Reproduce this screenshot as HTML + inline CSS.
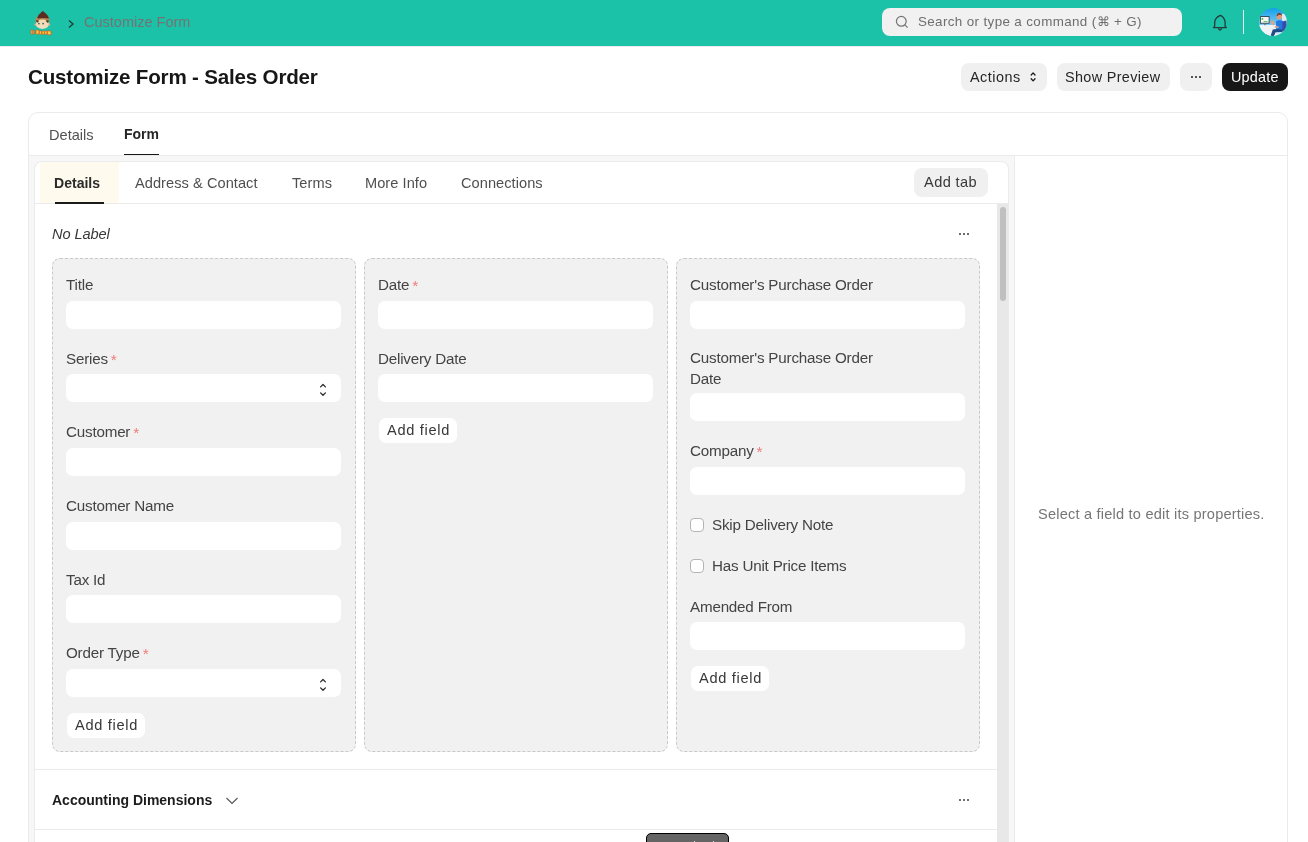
<!DOCTYPE html>
<html><head><meta charset="utf-8">
<style>
*{box-sizing:border-box;margin:0;padding:0}
html,body{width:1308px;height:842px;overflow:hidden;background:#fff;font-family:"Liberation Sans",sans-serif}
.r{position:absolute}
.t{position:absolute;white-space:nowrap;line-height:1;will-change:transform}
</style></head><body>
<div class="r" style="left:0px;top:0px;width:1308px;height:46px;background:#1bc2a8"></div>
<div class="r" style="left:0px;top:46px;width:1308px;height:1px;background:#ececec"></div>
<svg class="r" style="left:26px;top:8px" width="30" height="30" viewBox="26 8 30 30">
<path d="M35.3 22.5 L35.8 17.6 Q42 15.8 49 17.2 L49.4 22.5 Z" fill="#b98654"/>
<path d="M42.8 11 C41.2 12.6 38.2 14.3 37.4 17.4 L37.6 18.6 Q43 17.6 48.8 18.4 C48.6 15.2 45.2 13 42.8 11 Z" fill="#5c2b22"/>
<ellipse cx="42.4" cy="24.2" rx="6.6" ry="4.7" fill="#f2deb6"/>
<path d="M35.9 20.6 Q37.6 19.7 39.2 21 L37.2 22.8 Z" fill="#5a3826"/>
<path d="M45.6 21 Q47.4 19.7 48.9 20.8 L47.8 23 Z" fill="#5a3826"/>
<circle cx="38.9" cy="23.6" r="0.95" fill="#59606a"/>
<circle cx="43.1" cy="23.6" r="0.95" fill="#59606a"/>
<circle cx="35.6" cy="24.6" r="1.1" fill="#eeb29c"/>
<circle cx="49.1" cy="24.4" r="1.1" fill="#eeb29c"/>
<ellipse cx="41.6" cy="27.1" rx="2" ry="0.8" fill="#e9e2d6"/>
<g fill="#f7cf45" stroke="#d9531c" stroke-width="0.7">
<rect x="31" y="30" width="1.8" height="4" rx="0.4"/>
<rect x="33.2" y="30.4" width="1.3" height="3.6" rx="0.3"/>
<rect x="36" y="30" width="3" height="4.2" rx="0.8"/>
<rect x="39.3" y="31" width="2.4" height="3.2" rx="0.5"/>
<rect x="42" y="31" width="2.4" height="3.2" rx="0.5"/>
<rect x="44.7" y="31" width="2.4" height="3.2" rx="0.5"/>
<rect x="47.4" y="31" width="3.6" height="3.8" rx="0.6"/>
</g>
</svg>
<svg class="r" style="left:66px;top:18px" width="10" height="12" viewBox="0 0 10 12"><path d="M3 2.5 L7 6 L3 9.5" fill="none" stroke="#1d3b38" stroke-width="1.3"/></svg>
<div class="t" style="left:83.8px;top:15.42px;font-size:14.5px;color:#767272;font-weight:normal;font-style:normal;letter-spacing:0px;">Customize Form</div>
<div class="r" style="left:882px;top:8px;width:300px;height:28px;background:#f1f1f1;border-radius:8px"></div>
<svg class="r" style="left:895px;top:15px" width="14" height="14" viewBox="0 0 14 14"><circle cx="6.3" cy="6.3" r="4.9" fill="none" stroke="#747474" stroke-width="1.2"/><path d="M9.9 9.9 L12.6 12.6" stroke="#747474" stroke-width="1.2"/></svg>
<div class="t" style="left:918.2px;top:15.45px;font-size:13.4px;color:#6e6e6e;font-weight:normal;font-style:normal;letter-spacing:0.37px;">Search or type a command (⌘ + G)</div>
<svg class="r" style="left:1208px;top:10px" width="24" height="24" viewBox="1208 10 24 24"><path d="M1220.4 15.3 C1217.4 16.6 1215 18.6 1214.7 22 L1214.7 26.1 L1213.5 27.6 L1226.3 27.6 L1225.1 26.1 L1225.1 22 C1224.8 18.6 1223.2 16.6 1220.4 15.3 Z" fill="none" stroke="#263a37" stroke-width="1.3" stroke-linejoin="round"/><path d="M1218.4 28.3 L1219.9 30.2 L1222 28.6" fill="none" stroke="#263a37" stroke-width="1.2"/></svg>
<div class="r" style="left:1243px;top:10px;width:1px;height:24px;background:#e8f3f1"></div>
<svg class="r" style="left:1259px;top:8px" width="28" height="28" viewBox="1259 8 28 28">
<defs><clipPath id="av"><circle cx="1273" cy="22" r="13.9"/></clipPath>
<linearGradient id="sky" x1="0" y1="0" x2="0" y2="1"><stop offset="0" stop-color="#11a0ea"/><stop offset="0.6" stop-color="#7cc8f0"/><stop offset="1" stop-color="#e8f4fb"/></linearGradient></defs>
<g clip-path="url(#av)">
<rect x="1259" y="8" width="28" height="28" fill="url(#sky)"/>
<path d="M1282 14 Q1286 13 1288 16 L1288 24 L1282 22 Z" fill="#dcebf5"/>
<rect x="1259" y="25" width="17" height="11" fill="#eef3f8"/>
<rect x="1260" y="16.2" width="9.5" height="7.4" fill="#2c3440"/>
<rect x="1260.8" y="17" width="7.9" height="5.8" fill="#f4f6f4"/>
<rect x="1261.6" y="18" width="1.6" height="1.8" fill="#3cbf4a"/>
<rect x="1263.6" y="21" width="4" height="0.9" fill="#4cc35a"/>
<rect x="1264.3" y="23.6" width="1.2" height="1.6" fill="#666"/>
<circle cx="1279.2" cy="16.8" r="2.7" fill="#e49a72"/>
<path d="M1276.6 15.6 Q1277.2 12.6 1280 12.9 Q1282.2 13.4 1282 16 L1281 15 Q1279 14.4 1277.2 16.2 Z" fill="#7a4124"/>
<path d="M1270.6 21.5 Q1272 19.5 1273 20.6 L1275 24.6 L1273.4 25.4 Z" fill="#eba07c"/>
<path d="M1276 21.2 Q1279.5 19.4 1283 21 L1284 30 L1276.4 30.5 Z" fill="#1f79df"/>
<path d="M1282.4 21.5 L1286.5 20.5 L1287 31 L1282.5 31 Z" fill="#3949a8"/>
<path d="M1275 26 L1279 26.6 L1278.4 28 L1274.5 27.4 Z" fill="#eba07c"/>
<path d="M1270.5 36 L1272.8 29.5 Q1276 28.6 1283 29.6 L1282.5 32 L1275.6 32.2 L1274 36 Z" fill="#1f4b86"/>
</g></svg>
<div class="t" style="left:27.5px;top:67.06px;font-size:20.6px;color:#171717;font-weight:bold;font-style:normal;letter-spacing:-0.2px;">Customize Form - Sales Order</div>
<div class="r" style="left:961px;top:63px;width:86px;height:28px;background:#f0f0f0;border-radius:8px"></div>
<div class="t" style="left:969.5px;top:70.01px;font-size:14.4px;color:#262626;font-weight:normal;font-style:normal;letter-spacing:0.5px;">Actions</div>
<svg class="r" style="left:1029px;top:70px" width="8" height="14" viewBox="0 0 8 14"><path d="M2.2 5 L4.1 2.9 L6 5" fill="none" stroke="#1a1a1a" stroke-width="1.3" stroke-linecap="round" stroke-linejoin="round"/><path d="M2.2 8.8 L4.1 10.9 L6 8.8" fill="none" stroke="#1a1a1a" stroke-width="1.3" stroke-linecap="round" stroke-linejoin="round"/></svg>
<div class="r" style="left:1057px;top:63px;width:113px;height:28px;background:#f0f0f0;border-radius:8px"></div>
<div class="t" style="left:1065px;top:70.01px;font-size:14.4px;color:#262626;font-weight:normal;font-style:normal;letter-spacing:0.35px;">Show Preview</div>
<div class="r" style="left:1180px;top:63px;width:32px;height:28px;background:#f0f0f0;border-radius:8px"></div>
<div class="r" style="left:1191px;top:76px;width:2px;height:2px;background:#555"></div>
<div class="r" style="left:1195px;top:76px;width:2px;height:2px;background:#555"></div>
<div class="r" style="left:1199px;top:76px;width:2px;height:2px;background:#555"></div>
<div class="r" style="left:1222px;top:63px;width:66px;height:28px;background:#171717;border-radius:8px"></div>
<div class="t" style="left:1230.5px;top:70.01px;font-size:14.4px;color:#ffffff;font-weight:normal;font-style:normal;letter-spacing:0.2px;">Update</div>
<div class="r" style="left:28px;top:112px;width:1260px;height:788px;border:1px solid #ebebeb;border-radius:10px;background:#fff"></div>
<div class="t" style="left:49.1px;top:127.84px;font-size:14.6px;color:#525252;font-weight:normal;font-style:normal;letter-spacing:0px;">Details</div>
<div class="t" style="left:124px;top:127.25px;font-size:14.0px;color:#262626;font-weight:bold;font-style:normal;letter-spacing:0px;">Form</div>
<div class="r" style="left:124px;top:154px;width:35px;height:1.5px;background:#171717"></div>
<div class="r" style="left:29px;top:155px;width:1258px;height:1px;background:#ebebeb"></div>
<div class="r" style="left:29px;top:156px;width:985px;height:686px;background:#f7f7f7"></div>
<div class="r" style="left:1014px;top:156px;width:1px;height:686px;background:#ebebeb"></div>
<div class="t" style="left:1037.8px;top:506.94px;font-size:14.6px;color:#767676;font-weight:normal;font-style:normal;letter-spacing:0.2px;">Select a field to edit its properties.</div>
<div class="r" style="left:34px;top:161px;width:975px;height:739px;background:#fff;border:1px solid #ebebeb;border-radius:8px"></div>
<div class="r" style="left:40px;top:162px;width:79px;height:41px;background:#fffaee"></div>
<div class="r" style="left:35px;top:203px;width:973px;height:1px;background:#ebebeb"></div>
<div class="r" style="left:55px;top:202px;width:49px;height:1.5999999999999943px;background:#1a1a1a"></div>
<div class="t" style="left:54.2px;top:176.40px;font-size:14.05px;color:#2b2b2b;font-weight:bold;font-style:normal;letter-spacing:0px;">Details</div>
<div class="t" style="left:135px;top:175.94px;font-size:14.6px;color:#4f4f4f;font-weight:normal;font-style:normal;letter-spacing:0.05px;">Address &amp; Contact</div>
<div class="t" style="left:291.5px;top:175.94px;font-size:14.6px;color:#4f4f4f;font-weight:normal;font-style:normal;letter-spacing:0.05px;">Terms</div>
<div class="t" style="left:365.3px;top:175.94px;font-size:14.6px;color:#4f4f4f;font-weight:normal;font-style:normal;letter-spacing:0.05px;">More Info</div>
<div class="t" style="left:461.2px;top:175.94px;font-size:14.6px;color:#4f4f4f;font-weight:normal;font-style:normal;letter-spacing:0.05px;">Connections</div>
<div class="r" style="left:914px;top:168px;width:74px;height:29px;background:#f0f0f0;border-radius:8px"></div>
<div class="t" style="left:924px;top:174.84px;font-size:14.6px;color:#383838;font-weight:normal;font-style:normal;letter-spacing:0.4px;">Add tab</div>
<div class="r" style="left:997px;top:204px;width:12px;height:638px;background:#e8e8e8"></div>
<div class="r" style="left:1000px;top:207px;width:6px;height:94px;background:#c0c0c0;border-radius:3px"></div>
<div class="t" style="left:52.1px;top:226.54px;font-size:14.6px;color:#383838;font-weight:normal;font-style:italic;letter-spacing:-0.1px;">No Label</div>
<div class="r" style="left:959px;top:233px;width:2px;height:2px;background:#6e6e6e"></div>
<div class="r" style="left:963px;top:233px;width:2px;height:2px;background:#6e6e6e"></div>
<div class="r" style="left:967px;top:233px;width:2px;height:2px;background:#6e6e6e"></div>
<div class="r" style="left:52px;top:258px;width:304px;height:494px;background:#f1f1f1;border:1px dashed #c9c9c9;border-radius:8px"></div>
<div class="r" style="left:364px;top:258px;width:304px;height:494px;background:#f1f1f1;border:1px dashed #c9c9c9;border-radius:8px"></div>
<div class="r" style="left:676px;top:258px;width:304px;height:494px;background:#f1f1f1;border:1px dashed #c9c9c9;border-radius:8px"></div>
<div class="t" style="left:66px;top:276.53px;font-size:15.2px;color:#444444;font-weight:normal;font-style:normal;letter-spacing:-0.2px;">Title</div>
<div class="r" style="left:66px;top:301px;width:275px;height:28px;background:#fff;border-radius:7px"></div>
<div class="t" style="left:66px;top:351.03px;font-size:15.2px;color:#444444;font-weight:normal;font-style:normal;letter-spacing:-0.2px;">Series<span style="color:#f27a7a;margin-left:3px;font-size:15.5px;line-height:0;position:relative;top:0.5px">*</span></div>
<div class="r" style="left:66px;top:374px;width:275px;height:28px;background:#fff;border-radius:7px"></div>
<svg class="r" style="left:319px;top:382px" width="8" height="16" viewBox="0 0 8 16"><path d="M1.6 4.9 L4 2.5 L6.4 4.9" fill="none" stroke="#2a2a2a" stroke-width="1.3" stroke-linecap="round" stroke-linejoin="round"/><path d="M1.6 10.9 L4 13.3 L6.4 10.9" fill="none" stroke="#2a2a2a" stroke-width="1.3" stroke-linecap="round" stroke-linejoin="round"/></svg>
<div class="t" style="left:66px;top:423.93px;font-size:15.2px;color:#444444;font-weight:normal;font-style:normal;letter-spacing:-0.2px;">Customer<span style="color:#f27a7a;margin-left:3px;font-size:15.5px;line-height:0;position:relative;top:0.5px">*</span></div>
<div class="r" style="left:66px;top:448px;width:275px;height:28px;background:#fff;border-radius:7px"></div>
<div class="t" style="left:66px;top:498.03px;font-size:15.2px;color:#444444;font-weight:normal;font-style:normal;letter-spacing:-0.2px;">Customer Name</div>
<div class="r" style="left:66px;top:522px;width:275px;height:28px;background:#fff;border-radius:7px"></div>
<div class="t" style="left:66px;top:571.83px;font-size:15.2px;color:#444444;font-weight:normal;font-style:normal;letter-spacing:-0.2px;">Tax Id</div>
<div class="r" style="left:66px;top:595px;width:275px;height:28px;background:#fff;border-radius:7px"></div>
<div class="t" style="left:66px;top:644.63px;font-size:15.2px;color:#444444;font-weight:normal;font-style:normal;letter-spacing:-0.2px;">Order Type<span style="color:#f27a7a;margin-left:3px;font-size:15.5px;line-height:0;position:relative;top:0.5px">*</span></div>
<div class="r" style="left:66px;top:669px;width:275px;height:28px;background:#fff;border-radius:7px"></div>
<svg class="r" style="left:319px;top:677px" width="8" height="16" viewBox="0 0 8 16"><path d="M1.6 4.9 L4 2.5 L6.4 4.9" fill="none" stroke="#2a2a2a" stroke-width="1.3" stroke-linecap="round" stroke-linejoin="round"/><path d="M1.6 10.9 L4 13.3 L6.4 10.9" fill="none" stroke="#2a2a2a" stroke-width="1.3" stroke-linecap="round" stroke-linejoin="round"/></svg>
<div class="r" style="left:67px;top:713px;width:78px;height:25px;background:#fff;border-radius:7px"></div>
<div class="t" style="left:75px;top:717.84px;font-size:14.6px;color:#383838;font-weight:normal;font-style:normal;letter-spacing:0.7px;">Add field</div>
<div class="t" style="left:378px;top:276.63px;font-size:15.2px;color:#444444;font-weight:normal;font-style:normal;letter-spacing:-0.2px;">Date<span style="color:#f27a7a;margin-left:3px;font-size:15.5px;line-height:0;position:relative;top:0.5px">*</span></div>
<div class="r" style="left:378px;top:301px;width:275px;height:28px;background:#fff;border-radius:7px"></div>
<div class="t" style="left:378px;top:351.03px;font-size:15.2px;color:#444444;font-weight:normal;font-style:normal;letter-spacing:-0.2px;">Delivery Date</div>
<div class="r" style="left:378px;top:374px;width:275px;height:28px;background:#fff;border-radius:7px"></div>
<div class="r" style="left:379px;top:418px;width:78px;height:25px;background:#fff;border-radius:7px"></div>
<div class="t" style="left:387px;top:422.84px;font-size:14.6px;color:#383838;font-weight:normal;font-style:normal;letter-spacing:0.7px;">Add field</div>
<div class="t" style="left:690px;top:276.63px;font-size:15.2px;color:#444444;font-weight:normal;font-style:normal;letter-spacing:-0.2px;">Customer's Purchase Order</div>
<div class="r" style="left:690px;top:301px;width:275px;height:28px;background:#fff;border-radius:7px"></div>
<div class="t" style="left:690px;top:349.63px;font-size:15.2px;color:#444444;font-weight:normal;font-style:normal;letter-spacing:-0.2px;">Customer's Purchase Order</div>
<div class="t" style="left:690px;top:370.83px;font-size:15.2px;color:#444444;font-weight:normal;font-style:normal;letter-spacing:-0.2px;">Date</div>
<div class="r" style="left:690px;top:393px;width:275px;height:28px;background:#fff;border-radius:7px"></div>
<div class="t" style="left:690px;top:443.03px;font-size:15.2px;color:#444444;font-weight:normal;font-style:normal;letter-spacing:-0.2px;">Company<span style="color:#f27a7a;margin-left:3px;font-size:15.5px;line-height:0;position:relative;top:0.5px">*</span></div>
<div class="r" style="left:690px;top:467px;width:275px;height:28px;background:#fff;border-radius:7px"></div>
<div class="r" style="left:690px;top:518px;width:14px;height:14px;background:#fff;border:1px solid #b5b5b5;border-radius:4px"></div>
<div class="t" style="left:712.3px;top:517.03px;font-size:15.2px;color:#444444;font-weight:normal;font-style:normal;letter-spacing:-0.2px;">Skip Delivery Note</div>
<div class="r" style="left:690px;top:559px;width:14px;height:14px;background:#fff;border:1px solid #b5b5b5;border-radius:4px"></div>
<div class="t" style="left:712.3px;top:557.83px;font-size:15.2px;color:#444444;font-weight:normal;font-style:normal;letter-spacing:-0.2px;">Has Unit Price Items</div>
<div class="t" style="left:690px;top:598.83px;font-size:15.2px;color:#444444;font-weight:normal;font-style:normal;letter-spacing:-0.2px;">Amended From</div>
<div class="r" style="left:690px;top:622px;width:275px;height:28px;background:#fff;border-radius:7px"></div>
<div class="r" style="left:691px;top:666px;width:78px;height:25px;background:#fff;border-radius:7px"></div>
<div class="t" style="left:699px;top:670.84px;font-size:14.6px;color:#383838;font-weight:normal;font-style:normal;letter-spacing:0.7px;">Add field</div>
<div class="r" style="left:35px;top:769px;width:962px;height:1px;background:#ebebeb"></div>
<div class="t" style="left:51.9px;top:793.25px;font-size:14.0px;color:#1c1c1c;font-weight:bold;font-style:normal;letter-spacing:0px;">Accounting Dimensions</div>
<svg class="r" style="left:225px;top:796px" width="14" height="10" viewBox="0 0 14 10"><path d="M1.5 2 L7 7.5 L12.5 2" fill="none" stroke="#555" stroke-width="1.1"/></svg>
<div class="r" style="left:959px;top:799px;width:2px;height:2px;background:#6e6e6e"></div>
<div class="r" style="left:963px;top:799px;width:2px;height:2px;background:#6e6e6e"></div>
<div class="r" style="left:967px;top:799px;width:2px;height:2px;background:#6e6e6e"></div>
<div class="r" style="left:35px;top:829px;width:962px;height:1px;background:#ebebeb"></div>
<div class="r" style="left:646px;top:833px;width:83px;height:27px;background:#646464;border:1px solid #000;border-top-width:1.5px;border-radius:5px"></div>
<div class="r" style="left:694px;top:841px;width:1px;height:1px;background:#e0e0e0"></div>
<div class="r" style="left:713px;top:841px;width:1px;height:1px;background:#e0e0e0"></div>
</body></html>
